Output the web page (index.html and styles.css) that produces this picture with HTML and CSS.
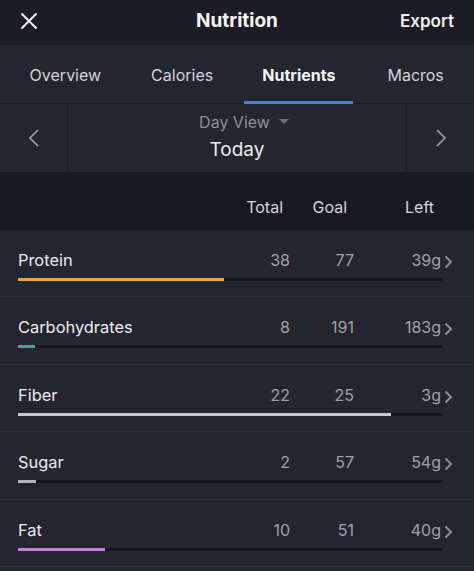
FILE: index.html
```html
<!DOCTYPE html>
<html lang="en">
<head>
    <meta charset="UTF-8">
    <meta name="viewport" content="width=device-width, initial-scale=1.0">
    <title>Nutrition</title>
    <link rel="stylesheet" href="styles.css">
</head>
<body>
    <div class="screen">
        <div class="topbar">
            <svg class="close" width="18" height="18" viewBox="0 0 18 18">
                <path d="M2 2 L16 16 M16 2 L2 16" stroke="#f2f2f5" stroke-width="2" stroke-linecap="round"/>
            </svg>
            <h1>Nutrition</h1>
            <span class="export">Export</span>
        </div>

        <div class="tabs">
            <div class="tab">Overview</div>
            <div class="tab">Calories</div>
            <div class="tab active">Nutrients</div>
            <div class="tab">Macros</div>
        </div>

        <div class="dayview">
            <div class="nav">
                <svg width="12" height="18" viewBox="0 0 12 18"><polyline points="10,1 2,9 10,17" fill="none" stroke="#a4a6ae" stroke-width="1.6"/></svg>
            </div>
            <div class="day">
                <div class="day-mode">Day View <span class="caret"></span></div>
                <div class="day-name">Today</div>
            </div>
            <div class="nav">
                <svg width="12" height="18" viewBox="0 0 12 18"><polyline points="2,1 10,9 2,17" fill="none" stroke="#a4a6ae" stroke-width="1.6"/></svg>
            </div>
        </div>

        <div class="colhead">
            <span></span>
            <span>Total</span>
            <span>Goal</span>
            <span>Left</span>
            <span></span>
        </div>

        <div id="rows"></div>
    </div>

    <script>
    const nutrients = [
        { name: 'Protein', total: 38, goal: 77, left: '39g', color: '#f0a53c', fill: 48.6 },
        { name: 'Carbohydrates', total: 8, goal: 191, left: '183g', color: '#2fae9e', fill: 4.0 },
        { name: 'Fiber', total: 22, goal: 25, left: '3g', color: '#c9c9ce', fill: 88 },
        { name: 'Sugar', total: 2, goal: 57, left: '54g', color: '#b3b4ba', fill: 4.2 },
        { name: 'Fat', total: 10, goal: 51, left: '40g', color: '#c77ee0', fill: 20.6 }
    ];

    let html = '';
    nutrients.forEach(n => {
        html += `<div class="row">
            <div class="line">
                <span class="label">${n.name}</span>
                <span class="num">${n.total}</span>
                <span class="num">${n.goal}</span>
                <span class="num">${n.left}</span>
                <svg class="chev" width="9" height="14" viewBox="0 0 9 14"><polyline points="1.5,1.5 7,7 1.5,12.5" fill="none" stroke="#8c8e96" stroke-width="2"/></svg>
            </div>
            <div class="track"><div class="fill" style="width:${n.fill}%;background:${n.color}"></div></div>
        </div>`;
    });
    document.getElementById('rows').innerHTML = html;
    </script>
</body>
</html>
```

FILE: styles.css
```css
* {
    box-sizing: border-box;
}
body {
    margin: 0;
    background: #23252f;
    font-family: 'Inter', 'Roboto', sans-serif;
    color: #ececf0;
}
.screen {
    width: 474px;
    height: 571px;
    overflow: hidden;
    background: #23252f;
}
.topbar {
    height: 45px;
    background: #1b1c26;
    display: grid;
    grid-template-columns: 1fr auto 1fr;
    align-items: center;
    padding: 0 20px;
}
.topbar .close {
    display: block;
    margin-top: -4px;
}
.topbar h1 {
    margin: 0;
    font-size: 19px;
    font-weight: 700;
    color: #f4f4f6;
    margin-top: -4px;
}
.export {
    justify-self: end;
    font-size: 17px;
    font-weight: 600;
    color: #f0f0f3;
    margin-top: -3px;
}
.tabs {
    height: 59px;
    display: grid;
    grid-template-columns: repeat(4, 1fr);
    padding-left: 7px;
    border-bottom: 1px solid #1a1b23;
}
.tab {
    display: flex;
    align-items: center;
    justify-content: center;
    font-size: 16px;
    color: #d2d3d8;
    padding-top: 2px;
    position: relative;
}
.tab.active {
    font-weight: 700;
    color: #f4f4f6;
}
.tab.active::after {
    content: '';
    position: absolute;
    left: 3px;
    right: 4px;
    bottom: -1px;
    height: 3px;
    background: #4b7fd1;
}
.dayview {
    height: 68px;
    display: grid;
    grid-template-columns: 67px 1fr 67px;
}
.nav {
    display: flex;
    align-items: center;
    justify-content: center;
}
.day {
    border-left: 1px solid #1a1b22;
    border-right: 1px solid #1a1b22;
    display: flex;
    flex-direction: column;
    align-items: center;
    justify-content: center;
    padding-bottom: 4px;
}
.day-mode {
    font-size: 16px;
    color: #8d8f98;
    display: flex;
    align-items: center;
    gap: 9px;
    margin-left: 14px;
}
.caret {
    width: 0;
    height: 0;
    border-left: 5px solid transparent;
    border-right: 5px solid transparent;
    border-top: 5px solid #6c6e77;
}
.day-name {
    font-size: 19px;
    color: #ececf0;
    margin-top: 6px;
}
.colhead {
    height: 58px;
    background: #181a23;
    display: grid;
    grid-template-columns: 1fr 60px 64px 87px 12px;
    align-items: center;
    padding: 12px 21px 0 18px;
    font-size: 16px;
    color: #d4d5da;
}
.colhead span {
    text-align: right;
    padding-right: 7px;
}
.row {
    height: 67.4px;
    border-bottom: 1px solid #2e303b;
    padding: 20px 21px 0 18px;
}
.line {
    display: grid;
    grid-template-columns: 1fr 60px 64px 87px 12px;
    align-items: center;
    height: 20px;
}
.label {
    font-size: 16.4px;
    color: #ececf0;
}
.num {
    text-align: right;
    font-size: 16px;
    color: #9fa1a9;
}
.chev {
    justify-self: end;
    margin-top: 4px;
}
.track {
    height: 3px;
    margin-top: 8px;
    margin-right: 11px;
    background: #15161d;
}
.fill {
    height: 100%;
}
```
